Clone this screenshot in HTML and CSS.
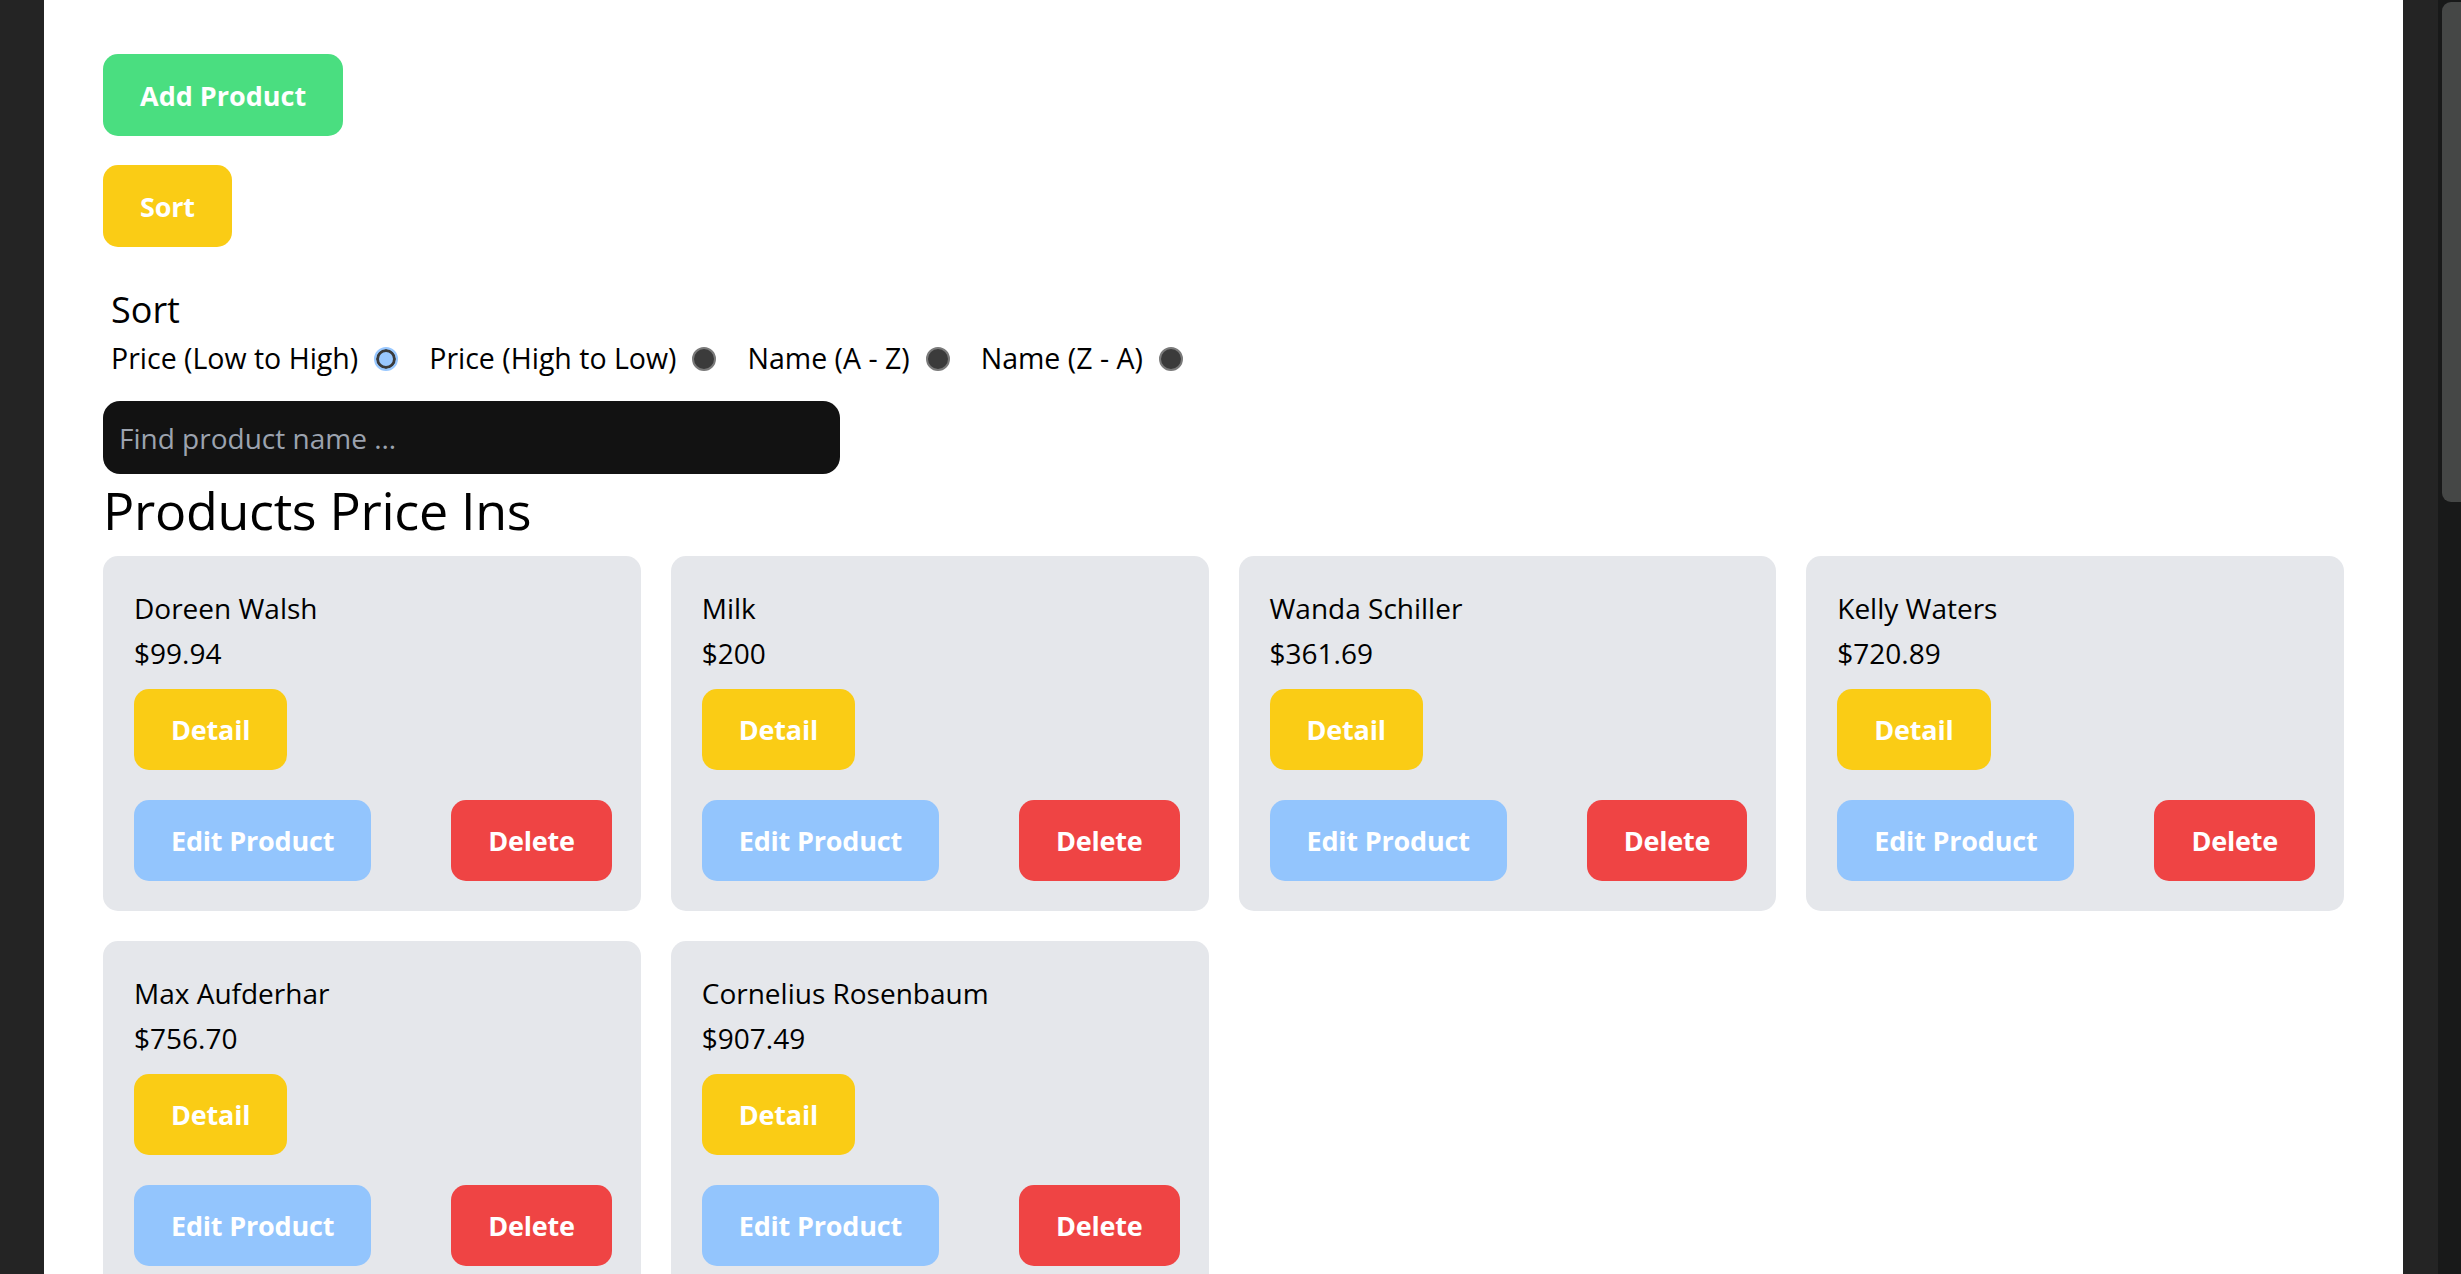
FILE: index.html
```html
<!DOCTYPE html>
<html lang="en">
<head>
<meta charset="utf-8">
<title>Products</title>
<link rel="stylesheet" href="styles.css">
</head>
<body>
<div class="frame">
  <div class="edge-left"></div>
  <main class="page">
    <div class="actions">
      <button class="btn btn-top btn-green">Add Product</button>
      <button class="btn btn-top btn-yellow">Sort</button>
    </div>
    <section class="sort-box">
      <h2 class="sort-title">Sort</h2>
      <div class="sort-options">
        <label class="opt">Price (Low to High) <input type="radio" name="sort" checked></label>
        <label class="opt">Price (High to Low) <input type="radio" name="sort"></label>
        <label class="opt">Name (A - Z) <input type="radio" name="sort"></label>
        <label class="opt">Name (Z - A) <input type="radio" name="sort"></label>
      </div>
    </section>
    <input class="search" type="text" placeholder="Find product name ...">
    <h1 class="title">Products Price Ins</h1>
    <div class="grid">
      <div class="card">
        <p class="name">Doreen Walsh</p>
        <p class="price">$99.94</p>
        <button class="btn btn-yellow detail">Detail</button>
        <div class="card-actions">
          <button class="btn btn-blue">Edit Product</button>
          <button class="btn btn-red">Delete</button>
        </div>
      </div>
      <div class="card">
        <p class="name">Milk</p>
        <p class="price">$200</p>
        <button class="btn btn-yellow detail">Detail</button>
        <div class="card-actions">
          <button class="btn btn-blue">Edit Product</button>
          <button class="btn btn-red">Delete</button>
        </div>
      </div>
      <div class="card">
        <p class="name">Wanda Schiller</p>
        <p class="price">$361.69</p>
        <button class="btn btn-yellow detail">Detail</button>
        <div class="card-actions">
          <button class="btn btn-blue">Edit Product</button>
          <button class="btn btn-red">Delete</button>
        </div>
      </div>
      <div class="card">
        <p class="name">Kelly Waters</p>
        <p class="price">$720.89</p>
        <button class="btn btn-yellow detail">Detail</button>
        <div class="card-actions">
          <button class="btn btn-blue">Edit Product</button>
          <button class="btn btn-red">Delete</button>
        </div>
      </div>
      <div class="card">
        <p class="name">Max Aufderhar</p>
        <p class="price">$756.70</p>
        <button class="btn btn-yellow detail">Detail</button>
        <div class="card-actions">
          <button class="btn btn-blue">Edit Product</button>
          <button class="btn btn-red">Delete</button>
        </div>
      </div>
      <div class="card">
        <p class="name">Cornelius Rosenbaum</p>
        <p class="price">$907.49</p>
        <button class="btn btn-yellow detail">Detail</button>
        <div class="card-actions">
          <button class="btn btn-blue">Edit Product</button>
          <button class="btn btn-red">Delete</button>
        </div>
      </div>
    </div>
  </main>
  <div class="edge-right"></div>
  <div class="scrollbar"><div class="thumb"></div></div>
</div>
</body>
</html>
```

FILE: styles.css
```css
* { box-sizing: border-box; }

html, body {
  margin: 0;
  padding: 0;
  height: 1274px;
  overflow: hidden;
  background: #242424;
}

body {
  font-family: "Open Sans", "Noto Sans", "DejaVu Sans", sans-serif;
  color: #000;
}

.frame {
  display: flex;
  height: 1274px;
}

.edge-left {
  width: 44px;
  flex: none;
  background: #242424;
}

.page {
  flex: 1;
  background: #ffffff;
  padding: 54px 59px 0 59px;
  overflow: hidden;
}

.edge-right {
  width: 35px;
  flex: none;
  background: #242424;
}

.scrollbar {
  width: 23px;
  flex: none;
  background: #181919;
  padding: 2px 0 0 4px;
}

.thumb {
  height: 500px;
  background: #454746;
  border-radius: 9px 0 0 9px;
}

/* buttons */
.btn {
  display: block;
  border: none;
  font-family: inherit;
  font-weight: 700;
  font-size: 27px;
  letter-spacing: -0.2px;
  color: #ffffff;
  height: 81px;
  padding: 0 37px;
  border-radius: 15px;
  cursor: pointer;
  line-height: 1;
}

.btn-top { height: 82px; }

.btn-green { background: #4ade80; letter-spacing: 0; }
.btn-yellow { background: #facc15; }
.btn-blue { background: #93c5fd; }
.btn-red { background: #ef4444; }

.actions .btn-green { margin-bottom: 29px; }

/* sort */
.sort-box {
  margin-top: 30px;
  padding: 7px 8px;
}

.sort-title {
  margin: 0;
  font-size: 36px;
  font-weight: 400;
  line-height: 52px;
}

.sort-options {
  display: flex;
  align-items: center;
  font-size: 28.5px;
  line-height: 45px;
}

.opt {
  display: flex;
  align-items: center;
}

.opt input {
  appearance: none;
  -webkit-appearance: none;
  width: 24px;
  height: 24px;
  margin: 0 31px 0 16px;
  border-radius: 50%;
  background: #3b3b3b;
  border: 2px solid #7a7a7a;
}

.opt input:checked {
  background: #99c8ff;
  border: 2px solid #99c8ff;
  box-shadow: inset 0 0 0 3px #3b3b3b;
}

/* search */
.search {
  display: block;
  margin-top: 13px;
  width: 737px;
  height: 73px;
  border: none;
  border-radius: 17px;
  background: #121212;
  color: #ffffff;
  padding: 0 16px;
  font-family: inherit;
  font-size: 28px;
  outline: none;
}

.search::placeholder {
  color: #9ca3af;
}

.title {
  margin: 0 0 12px 0;
  padding-top: 2px;
  font-size: 52px;
  letter-spacing: -0.3px;
  font-weight: 400;
  line-height: 68px;
}

/* cards */
.grid {
  display: grid;
  grid-template-columns: repeat(4, 1fr);
  gap: 30px;
}

.card {
  background: #e5e7eb;
  border-radius: 15px;
  padding: 30px 29px 30px 31px;
}

.name, .price {
  margin: 0;
  font-size: 28px;
  line-height: 45px;
}

.detail {
  margin-top: 13px;
}

.card-actions {
  margin-top: 30px;
  display: flex;
  justify-content: space-between;
}
```
